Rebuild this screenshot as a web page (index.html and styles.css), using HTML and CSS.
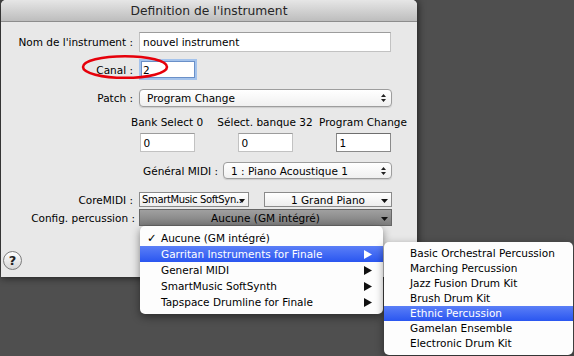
FILE: index.html
```html
<!DOCTYPE html>
<html lang="fr">
<head>
    <meta charset="UTF-8">
    <title>Definition de l'instrument</title>
    <link rel="stylesheet" href="styles.css">
</head>
<body>

<div class="window">
    <div class="titlebar">Definition de l'instrument</div>
    <div class="content">
        <div class="row">
            <span class="lbl">Nom de l'instrument :</span>
            <div class="field field-name">nouvel instrument</div>
        </div>
        <div class="row row-canal">
            <span class="lbl">Canal :</span>
            <div class="field field-canal">2</div>
        </div>
        <div class="row row-patch">
            <span class="lbl">Patch :</span>
            <div class="popup popup-patch">Program Change
                <svg class="updown" width="5" height="8" viewBox="0 0 5 8"><path d="M0 3L2.5 0L5 3Z M0 5L2.5 8L5 5Z"/></svg>
            </div>
        </div>
        <div class="banks">
            <div class="bank"><span>Bank Select 0</span><div class="field field-small">0</div></div>
            <div class="bank"><span>Sélect. banque 32</span><div class="field field-small">0</div></div>
            <div class="bank"><span>Program Change</span><div class="field field-small dark-border">1</div></div>
        </div>
        <div class="row row-gm">
            <span class="lbl lbl-gm">Général MIDI :</span>
            <div class="popup popup-gm">1 : Piano Acoustique 1
                <svg class="updown" width="5" height="8" viewBox="0 0 5 8"><path d="M0 3L2.5 0L5 3Z M0 5L2.5 8L5 5Z"/></svg>
            </div>
        </div>
        <div class="row row-core">
            <span class="lbl">CoreMIDI :</span>
            <div class="square sq-synth"><span class="synth-text">SmartMusic SoftSyn..</span>
                <svg class="down" width="6" height="4" viewBox="0 0 6 4"><path d="M0 0H6L3 4Z"/></svg>
            </div>
            <div class="square sq-piano"><span class="center-text">1 Grand Piano</span>
                <svg class="down" width="7" height="4" viewBox="0 0 7 4"><path d="M0 0H7L3.5 4Z"/></svg>
            </div>
        </div>
        <div class="row row-perc">
            <span class="lbl lbl-perc">Config. percussion :</span>
            <div class="square sq-perc"><span class="center-text">Aucune (GM intégré)</span>
                <svg class="down" width="7" height="4" viewBox="0 0 7 4"><path d="M0 0H7L3.5 4Z"/></svg>
            </div>
        </div>
        <div class="help">?</div>
    </div>
</div>

<svg class="ring" width="92" height="28" viewBox="0 0 92 28">
    <ellipse cx="46" cy="13" rx="42" ry="10.8" fill="none" stroke="#e6000a" stroke-width="2.6"/>
</svg>

<ul class="menu">
    <li><span class="check">✓</span>Aucune (GM intégré)</li>
    <li class="hl">Garritan Instruments for Finale<svg class="arrow" width="8" height="9" viewBox="0 0 8 9"><path d="M0 0L8 4.5L0 9Z"/></svg></li>
    <li>General MIDI<svg class="arrow" width="8" height="9" viewBox="0 0 8 9"><path d="M0 0L8 4.5L0 9Z"/></svg></li>
    <li>SmartMusic SoftSynth<svg class="arrow" width="8" height="9" viewBox="0 0 8 9"><path d="M0 0L8 4.5L0 9Z"/></svg></li>
    <li>Tapspace Drumline for Finale<svg class="arrow" width="8" height="9" viewBox="0 0 8 9"><path d="M0 0L8 4.5L0 9Z"/></svg></li>
</ul>

<ul class="submenu">
    <li>Basic Orchestral Percussion</li>
    <li>Marching Percussion</li>
    <li>Jazz Fusion Drum Kit</li>
    <li>Brush Drum Kit</li>
    <li class="hl">Ethnic Percussion</li>
    <li>Gamelan Ensemble</li>
    <li>Electronic Drum Kit</li>
</ul>

</body>
</html>
```

FILE: styles.css
```css
body {
    margin: 0;
    padding: 0;
    background-color: #4f4f4f;
    font-family: "DejaVu Sans", Verdana, sans-serif;
    font-size: 10.5px;
    color: #000;
    height: 356px;
    overflow: hidden;
    position: relative;
}

.window {
    margin-left: 1px;
    width: 416px;
    height: 277px;
    background: #e8e8e8;
    border-radius: 5px 5px 0 0;
    box-shadow: 0 0 9px rgba(0, 0, 0, 0.75);
}

.titlebar {
    height: 22px;
    line-height: 22px;
    box-sizing: border-box;
    text-align: center;
    font-size: 12.3px;
    color: #262626;
    background: linear-gradient(#e6e6e6, #bdbdbd);
    border-bottom: 1px solid #8d8d8d;
    border-radius: 5px 5px 0 0;
}

.content { padding-top: 10px; }

.row { display: flex; align-items: center; }

.lbl {
    width: 132px;
    text-align: right;
    white-space: nowrap;
}

.field {
    box-sizing: border-box;
    background: #fff;
    border: 1px solid #c2c2c2;
    border-top-color: #9c9c9c;
    padding-left: 3px;
    display: flex;
    align-items: center;
}
.field-name { width: 252px; height: 20px; margin-left: 6px; }

.row-canal { margin-top: 9px; }
.field-canal {
    width: 54px;
    height: 17px;
    margin-left: 8px;
    border-color: #6a90c8;
    box-shadow: 0 0 0 2px #a4c3ec;
    padding-left: 1px;
}

.row-patch { margin-top: 11px; }
.popup {
    box-sizing: border-box;
    height: 18px;
    display: flex;
    align-items: center;
    justify-content: space-between;
    padding: 0 5px 0 7px;
    border: 1px solid #9d9d9d;
    border-radius: 4px;
    background: linear-gradient(#ffffff, #f0f0f0);
    box-shadow: 0 1px 1px rgba(0, 0, 0, 0.12);
}
.popup-patch { width: 253px; margin-left: 6px; }
.updown { fill: #222; }

.banks {
    display: flex;
    padding-left: 117px;
    margin-top: 8px;
}
.bank {
    width: 98px;
    display: flex;
    flex-direction: column;
    align-items: center;
    white-space: nowrap;
    line-height: 14px;
}
.field-small { width: 55px; height: 19px; margin-top: 4px; }
.dark-border { border-color: #8a8a8a; border-top-color: #6e6e6e; }

.row-gm { margin-top: 10px; }
.lbl-gm { width: 217px; }
.popup-gm { width: 169px; height: 17px; margin-left: 5px; }

.row-core { margin-top: 13px; }
.square {
    box-sizing: border-box;
    height: 15px;
    border: 1px solid #8a8a8a;
    background: linear-gradient(#ffffff, #ededed);
    display: flex;
    align-items: center;
    position: relative;
}
.square .down { position: absolute; right: 3px; top: 6px; fill: #111; }
.sq-synth { width: 110px; margin-left: 6px; padding-left: 2px; }
.synth-text { font-size: 10px; letter-spacing: -0.35px; white-space: nowrap; }
.sq-piano { width: 128px; margin-left: 15px; }
.center-text { flex: 1; text-align: center; }

.row-perc { margin-top: 2px; }
.lbl-perc { width: 134px; }
.sq-perc {
    width: 253px;
    height: 17px;
    margin-left: 4px;
    border-color: #666;
    background: linear-gradient(#a0a0a0, #7c7c7c);
}
.sq-perc .down { top: 7px; }

.help {
    width: 19px;
    height: 19px;
    box-sizing: border-box;
    margin: 25px 0 0 2px;
    border: 1px solid #7c7c7c;
    border-radius: 50%;
    background: linear-gradient(#ffffff, #d6d6d6);
    font-weight: bold;
    font-size: 13px;
    line-height: 17px;
    text-align: center;
    color: #222;
}

.ring { position: absolute; left: 79px; top: 54px; }

.menu, .submenu {
    position: absolute;
    list-style: none;
    margin: 0;
    padding: 4px 0;
    background: #fdfdfd;
    border-radius: 5px;
    box-shadow: 0 3px 8px rgba(0, 0, 0, 0.45);
}
.menu { left: 140px; top: 226px; width: 243px; }
.menu li {
    height: 16px;
    line-height: 16px;
    padding-left: 21px;
    position: relative;
    white-space: nowrap;
}
.check { position: absolute; left: 7px; font-weight: bold; font-size: 11.5px; }
.arrow { position: absolute; right: 11px; top: 4px; fill: #111; }

.submenu { left: 384px; top: 242px; width: 189px; z-index: 2; }
.submenu li {
    height: 15px;
    line-height: 15px;
    padding-left: 26px;
    white-space: nowrap;
}

.hl {
    background: linear-gradient(#5b7ff7, #2a56f0);
    color: #fff;
}
.hl .arrow { fill: #fff; }
```
